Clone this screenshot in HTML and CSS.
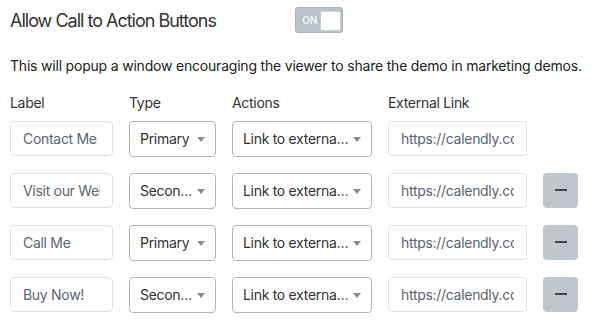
FILE: index.html
```html
<!DOCTYPE html>
<html>
<head>
    <meta charset="UTF-8">
    <title>Call to Action Buttons</title>
    <link rel="stylesheet" href="styles.css">
</head>
<body>
<div class="ctaBox">
    <div class="ctaHead">
        <h3 class="ctaTitle">Allow Call to Action Buttons</h3>
        <label class="switch">
            <span class="switchText">ON</span>
            <span class="switchKnob"></span>
        </label>
    </div>
    <p class="ctaDesc">This will popup a window encouraging the viewer to share the demo in marketing demos.</p>

    <div class="ctaCols">
        <span class="colLabel">Label</span>
        <span class="colType">Type</span>
        <span class="colAction">Actions</span>
        <span class="colLink">External Link</span>
    </div>

    <ul class="ctaList">
        <li class="ctaRow">
            <input class="field colLabel" type="text" value="Contact Me">
            <div class="select colType">Primary</div>
            <div class="select colAction">Link to external link</div>
            <input class="field colLink" type="text" value="https://calendly.com/demo">
        </li>
        <li class="ctaRow">
            <input class="field colLabel" type="text" value="Visit our Website">
            <div class="select colType">Secondary</div>
            <div class="select colAction">Link to external link</div>
            <input class="field colLink" type="text" value="https://calendly.com/demo">
            <button class="removeBtn" type="button"></button>
        </li>
        <li class="ctaRow">
            <input class="field colLabel" type="text" value="Call Me">
            <div class="select colType">Primary</div>
            <div class="select colAction">Link to external link</div>
            <input class="field colLink" type="text" value="https://calendly.com/demo">
            <button class="removeBtn" type="button"></button>
        </li>
        <li class="ctaRow">
            <input class="field colLabel" type="text" value="Buy Now!">
            <div class="select colType">Secondary</div>
            <div class="select colAction">Link to external link</div>
            <input class="field colLink" type="text" value="https://calendly.com/demo">
            <button class="removeBtn" type="button"></button>
        </li>
    </ul>
</div>
</body>
</html>
```

FILE: styles.css
```css
* {
    margin: 0;
    padding: 0;
    box-sizing: border-box;
    font-family: Inter, "Noto Sans", sans-serif;
    font-size: 14px;
    letter-spacing: -0.3px;
    color: #2b2b2b;
}

ul, li {
    list-style: none;
}

.ctaBox {
    padding: 0 10px;
}

.ctaHead {
    display: flex;
    align-items: center;
    height: 40px;
}

.ctaTitle {
    width: 285px;
    font-size: 18px;
    font-weight: 400;
    letter-spacing: -1px;
    color: #333;
}

.switch {
    position: relative;
    display: block;
    width: 48px;
    height: 26px;
    border: 1px solid #aab4ba;
    border-radius: 3px;
    background: #b9c3c9;
}

.switchText {
    position: absolute;
    left: 6px;
    top: 6px;
    font-size: 10px;
    font-weight: 700;
    line-height: 12px;
    letter-spacing: 0;
    color: #eef1f3;
}

.switchKnob {
    position: absolute;
    right: 1px;
    top: 3px;
    width: 21px;
    height: 20px;
    border: 1px solid #c9d0d4;
    border-radius: 2px;
    background: #fff;
}

.ctaDesc {
    margin: 16px 0 17px;
    line-height: 20px;
    letter-spacing: -0.2px;
    white-space: nowrap;
    color: #222;
}

.ctaCols, .ctaRow {
    display: flex;
    gap: 16px;
}

.ctaCols {
    line-height: 20px;
    margin-bottom: 8px;
}

.ctaCols span {
    color: #333;
}

.colLabel {
    width: 103px;
}

.colType {
    width: 87px;
}

.colAction {
    width: 140px;
}

.colLink {
    width: 139px;
}

.ctaList {
    display: flex;
    flex-direction: column;
    gap: 16px;
}

.ctaRow {
    align-items: flex-start;
    height: 36px;
}

.field {
    height: 35px;
    padding: 0 12px;
    border: 1px solid #dfe2e6;
    border-radius: 4px;
    background: #fff;
    color: #5b6570;
    outline: none;
}

.select {
    position: relative;
    height: 36px;
    line-height: 34px;
    padding: 0 20px 0 10px;
    border: 1px solid #b4b4b4;
    border-radius: 4px;
    background: #fff;
    color: #333;
    white-space: nowrap;
    overflow: hidden;
    text-overflow: ellipsis;
}

.select::after {
    content: "";
    position: absolute;
    right: 10px;
    top: 15px;
    border-left: 4.5px solid transparent;
    border-right: 4.5px solid transparent;
    border-top: 5px solid #8c8c8c;
}

.removeBtn {
    position: relative;
    width: 35px;
    height: 35px;
    border: none;
    border-radius: 4px;
    background: #bec8ce;
    cursor: pointer;
}

.removeBtn::after {
    content: "";
    position: absolute;
    left: 12px;
    top: 16px;
    width: 12px;
    height: 2px;
    background: #3a444d;
}
```
